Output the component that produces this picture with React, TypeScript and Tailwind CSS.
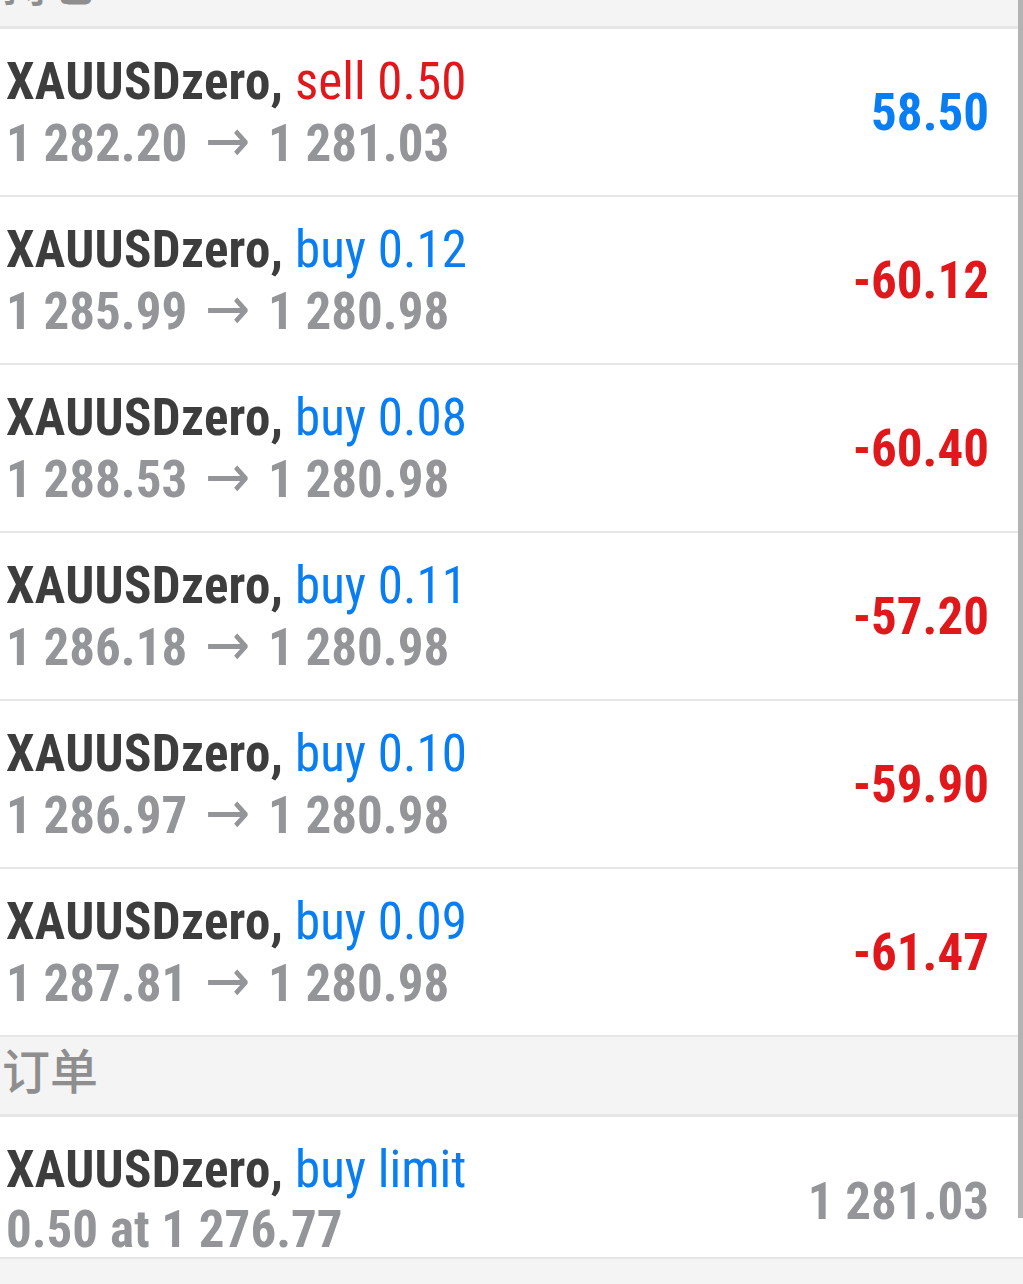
import React from "react";

type Pos = { side: "buy" | "sell"; lot: string; open: string; cur: string; profit: string };

const positions: Pos[] = [
  { side: "sell", lot: "0.50", open: "1 282.20", cur: "1 281.03", profit: "58.50" },
  { side: "buy", lot: "0.12", open: "1 285.99", cur: "1 280.98", profit: "-60.12" },
  { side: "buy", lot: "0.08", open: "1 288.53", cur: "1 280.98", profit: "-60.40" },
  { side: "buy", lot: "0.11", open: "1 286.18", cur: "1 280.98", profit: "-57.20" },
  { side: "buy", lot: "0.10", open: "1 286.97", cur: "1 280.98", profit: "-59.90" },
  { side: "buy", lot: "0.09", open: "1 287.81", cur: "1 280.98", profit: "-61.47" },
];

const font = {
  fontFamily: '"Roboto Condensed", "Liberation Sans Narrow", "DejaVu Sans Condensed", Roboto, sans-serif',
};

function Header({ title, className = "" }: { title: string; className?: string }) {
  return (
    <div
      className={`h-[80px] bg-[#f4f4f4] border-b-[3px] border-[#e6e6e6] flex items-center pl-[2px] pb-[16px] text-[48px] text-[#8e8e8e] font-medium ${className}`}
      style={{ fontFamily: '"Noto Sans CJK SC", sans-serif' }}
    >
      {title}
    </div>
  );
}

export default function App() {
  return (
    <div className="relative w-[1023px] h-[1284px] overflow-hidden bg-[#f4f4f4]" style={font}>
      <Header title="持仓" className="-mt-[51px]" />
      {positions.map((p, i) => (
        <div
          key={i}
          className="h-[168px] bg-white border-b-2 border-[#e6e6e6] flex items-center justify-between pl-[6px] pr-[34px] [font-stretch:condensed]"
        >
          <div className="text-[51px] leading-[59px]">
            <div className="whitespace-nowrap">
              <span className="font-bold text-[#3d3d3d] tracking-[0.3px]">XAUUSDzero,</span>{" "}
              <span className={p.side === "sell" ? "text-[#e0181c]" : "text-[#087ef2]"}>
                {p.side} {p.lot}
              </span>
            </div>
            <div className="font-bold text-[#939598] whitespace-nowrap">
              {p.open}
              <span className="mx-[4px] font-normal text-[60px] leading-none"> → </span>
              {p.cur}
            </div>
          </div>
          <div
            className={`text-[51px] leading-[59px] font-bold ${
              p.profit.startsWith("-") ? "text-[#e0181c]" : "text-[#087ef2]"
            }`}
          >
            {p.profit}
          </div>
        </div>
      ))}
      <Header title="订单" />
      <div className="h-[142px] bg-white border-b-2 border-[#e6e6e6] flex items-start justify-between pl-[6px] pr-[34px] pt-[23px] [font-stretch:condensed]">
        <div className="text-[51px] leading-[60px]">
          <div className="whitespace-nowrap">
            <span className="font-bold text-[#3d3d3d] tracking-[0.3px]">XAUUSDzero,</span>{" "}
            <span className="text-[#087ef2]">buy limit</span>
          </div>
          <div className="font-bold text-[#939598] whitespace-nowrap">0.50 at 1 276.77</div>
        </div>
        <div className="text-[51px] leading-[60px] font-bold text-[#939598] pt-[32px]">1 281.03</div>
      </div>
      <div className="absolute right-0 top-0 w-[5px] h-[1218px] bg-[#b3b3b3]" />
    </div>
  );
}
